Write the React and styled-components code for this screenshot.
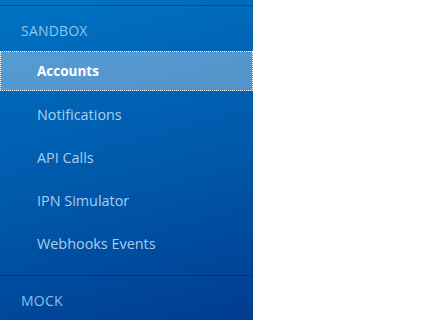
import React from 'react';
import styled, {createGlobalStyle} from 'styled-components';

const GlobalStyle = createGlobalStyle`
  html, body {
    margin: 0;
    padding: 0;
    background: #fff;
  }
  body {
    font-family: "Open Sans", "Noto Sans", sans-serif;
  }
`;

const Page = styled.div`
  display: flex;
  height: 320px;
  overflow: hidden;
`;

const Sidebar = styled.nav`
  width: 253px;
  flex-shrink: 0;
  padding-top: 5px;
  background: linear-gradient(165deg, #0073c3 0%, #0058aa 55%, #003c90 100%);
`;

const Section = styled.div`
  border-top: 1px solid rgba(0, 20, 60, 0.35);
  padding-bottom: 12px;
`;

const SectionTitle = styled.div`
  padding: 15px 21px 10px;
  font-size: 14px;
  line-height: 20px;
  color: rgba(190, 225, 255, 0.78);
  letter-spacing: 0.2px;
`;

const ItemList = styled.ul`
  list-style: none;
  margin: 0;
  padding: 0;
  display: flex;
  flex-direction: column;
  gap: 3px;
`;

const Item = styled.li`
  height: 40px;
  display: flex;
  align-items: center;
  padding-left: 37px;
  font-size: ${(p) => (p.$active ? '13.5px' : '14.4px')};
  font-weight: ${(p) => (p.$active ? 700 : 400)};
  color: ${(p) => (p.$active ? '#ffffff' : 'rgba(205, 228, 250, 0.85)')};
  background: ${(p) => (p.$active ? 'rgba(255, 255, 255, 0.33)' : 'transparent')};
  outline: ${(p) => (p.$active ? '1px dotted #ffffff' : 'none')};
  outline-offset: -1px;
`;

const sections = [
  {
    title: 'SANDBOX',
    items: ['Accounts', 'Notifications', 'API Calls', 'IPN Simulator', 'Webhooks Events'],
  },
  {title: 'MOCK', items: []},
];

export default function App() {
  return (
    <>
      <GlobalStyle />
      <Page>
        <Sidebar>
          {sections.map((s) => (
            <Section key={s.title}>
              <SectionTitle>{s.title}</SectionTitle>
              <ItemList>
                {s.items.map((i) => (
                  <Item key={i} $active={i === 'Accounts'}>
                    {i}
                  </Item>
                ))}
              </ItemList>
            </Section>
          ))}
        </Sidebar>
      </Page>
    </>
  );
}
